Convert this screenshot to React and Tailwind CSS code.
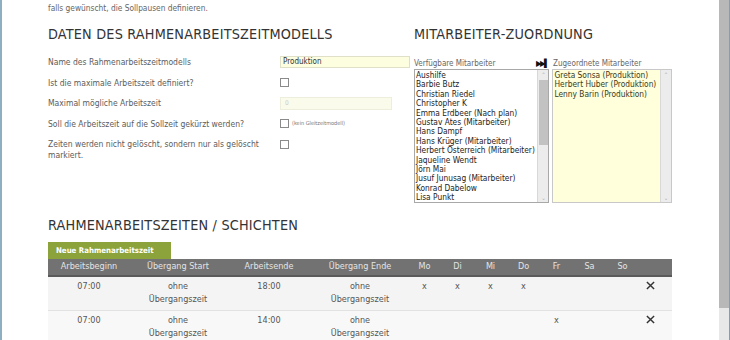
import { useState } from "react";

const font = { fontFamily: '"DejaVu Sans Condensed", "DejaVu Sans", Verdana, sans-serif' };

const available = [
  "Aushilfe",
  "Barbie Butz",
  "Christian Riedel",
  "Christopher K",
  "Emma Erdbeer (Nach plan)",
  "Gustav Ates (Mitarbeiter)",
  "Hans Dampf",
  "Hans Krüger (Mitarbeiter)",
  "Herbert Österreich (Mitarbeiter)",
  "Jaqueline Wendt",
  "Jörn Mai",
  "Jusuf Junusag (Mitarbeiter)",
  "Konrad Dabelow",
  "Lisa Punkt",
];

const assigned = [
  "Greta Sonsa (Produktion)",
  "Herbert Huber (Produktion)",
  "Lenny Barin (Produktion)",
];

const days = ["Mo", "Di", "Mi", "Do", "Fr", "Sa", "So"];

const shifts = [
  { start: "07:00", end: "18:00", days: [true, true, true, true, false, false, false] },
  { start: "07:00", end: "14:00", days: [false, false, false, false, true, false, false] },
];

const cols = "grid grid-cols-[82px_96px_86px_96px_33px_33px_33px_33px_33px_33px_33px_33px]";

const Checkbox = () => (
  <span className="inline-block w-[9px] h-[9px] border border-[#8a8a8a] bg-white" />
);

const ListScroll = ({ thumb }) => (
  <div className="w-[11px] h-full bg-[#ececec] border-l border-[#d8d8d8] flex flex-col items-center">
    <span className="text-[6px] leading-[9px] text-[#b0b0b0]">⌃</span>
    {thumb && <div className="w-[9px] h-[65px] bg-[#c2c2c2] mt-[1px]" />}
    <div className="flex-1" />
    <span className="text-[6px] leading-[9px] text-[#b0b0b0]">⌄</span>
  </div>
);

const FormRow = ({ label, children, tall }) => (
  <div className={`flex ${tall ? "h-[32px]" : "h-[20.5px]"} items-start`}>
    <div className="w-[232px] text-[8.5px] leading-[11px] text-[#5c5c5c] pt-[1px]">{label}</div>
    <div className="flex items-center gap-[3px] h-[12px]">{children}</div>
  </div>
);

export default function App() {
  const [name, setName] = useState("Produktion");

  return (
    <div className="w-[730px] h-[340px] overflow-hidden flex bg-white" style={font}>
      <div className="w-[2px] bg-[#8eaec2]" />
      <div className="flex-1 pl-[46px] pr-[46px]">
        <p className="text-[8.3px] leading-[10px] text-[#666] pt-[3px]">
          falls gewünscht, die Sollpausen definieren.
        </p>

        <div className="flex gap-[4px] mt-[13px]">
          <div className="w-[362px]">
            <h2 className="text-[14.3px] leading-[17px] text-[#333] tracking-[0.2px]">
              DATEN DES RAHMENARBEITSZEITMODELLS
            </h2>
            <div className="mt-[13px]">
              <FormRow label="Name des Rahmenarbeitszeitmodells">
                <input
                  value={name}
                  onChange={(e) => setName(e.target.value)}
                  className="w-[130px] h-[12px] bg-[#fdfde0] border border-[#e0e0c8] text-[8px] px-[2px] text-[#333] outline-none"
                />
              </FormRow>
              <FormRow label="Ist die maximale Arbeitszeit definiert?">
                <Checkbox />
              </FormRow>
              <FormRow label="Maximal mögliche Arbeitszeit">
                <div className="w-[112px] h-[13px] bg-[#fbfbec] border border-[#eeeedc] text-[6.5px] leading-[11px] pl-[4px] text-[#ccc]">
                  0
                </div>
              </FormRow>
              <FormRow label="Soll die Arbeitszeit auf die Sollzeit gekürzt werden?">
                <Checkbox />
                <span className="text-[5.5px] text-[#777]">(kein Gleitzeitmodell)</span>
              </FormRow>
              <FormRow tall label={<span className="block w-[232px]">Zeiten werden nicht gelöscht, sondern nur als gelöscht markiert.</span>}>
                <Checkbox />
              </FormRow>
            </div>
          </div>

          <div className="w-[258px]">
            <h2 className="text-[14.3px] leading-[17px] text-[#333] tracking-[0.2px]">
              MITARBEITER-ZUORDNUNG
            </h2>
            <div className="flex mt-[14px] items-end h-[12px]">
              <span className="w-[122px] text-[8px] leading-[10px] text-[#666]">Verfügbare Mitarbeiter</span>
              <span className="w-[17px] text-[8px] leading-[10px] text-[#111] tracking-[-1.5px]">▶▶▌</span>
              <span className="text-[8px] leading-[10px] text-[#666]">Zugeordnete Mitarbeiter</span>
            </div>
            <div className="flex gap-[3px] h-[134px]">
              <div className="w-[136px] h-full border border-[#a8a8a8] bg-white flex overflow-hidden">
                <ul className="flex-1 pl-[1px] pt-[1px] overflow-hidden">
                  {available.map((n) => (
                    <li key={n} className="text-[8.3px] leading-[9.4px] text-[#222] whitespace-nowrap">
                      {n}
                    </li>
                  ))}
                </ul>
                <ListScroll thumb />
              </div>
              <div className="w-[120px] h-full border border-[#c8c8c8] bg-[#ffffdc] flex overflow-hidden">
                <ul className="flex-1 pl-[1px] pt-[1px]">
                  {assigned.map((n) => (
                    <li key={n} className="text-[8.3px] leading-[9.4px] text-[#3a3a20] whitespace-nowrap">
                      {n}
                    </li>
                  ))}
                </ul>
                <ListScroll />
              </div>
            </div>
          </div>
        </div>

        <h2 className="text-[14.3px] leading-[17px] text-[#333] tracking-[0.2px] mt-[14px]">
          RAHMENARBEITSZEITEN / SCHICHTEN
        </h2>
        <button className="mt-[8px] h-[17px] w-[123px] bg-[#8ca23a] text-white text-[7.8px] font-bold text-left pl-[8px] block">
          Neue Rahmenarbeitszeit
        </button>
        <div className="w-[624px]">
          <div className={`${cols} h-[18px] bg-[#727272] border-b-2 border-[#5a5a5a] text-[9px] text-[#e4e4e4] items-center text-center`}>
            <span>Arbeitsbeginn</span>
            <span>Übergang Start</span>
            <span>Arbeitsende</span>
            <span>Übergang Ende</span>
            {days.map((d) => (
              <span key={d}>{d}</span>
            ))}
            <span />
          </div>
          {shifts.map((s, i) => (
            <div
              key={i}
              className={`${cols} h-[34px] ${i === 0 ? "bg-[#f4f4f4]" : "bg-[#f8f8f8]"} border-b border-[#e2e2e2] text-[9px] leading-[13px] text-[#555] text-center pt-[3px]`}
            >
              <span>{s.start}</span>
              <span>ohne<br />Übergangszeit</span>
              <span>{s.end}</span>
              <span>ohne<br />Übergangszeit</span>
              {s.days.map((on, j) => (
                <span key={j}>{on ? "x" : ""}</span>
              ))}
              <span className="flex justify-start pl-[7px] pt-[1px]">
                <svg width="9" height="9" viewBox="0 0 10 10">
                  <path d="M1 1 L9 9 M9 1 L1 9" stroke="#333" strokeWidth="1.6" />
                </svg>
              </span>
            </div>
          ))}
        </div>
      </div>
      <div className="w-[10px] flex flex-col">
        <div className="h-[308px] bg-[#b8b8b8]" />
        <div className="flex-1 bg-[#e8e8e8]" />
      </div>
      <div className="w-[1px] bg-[#7f9fb8]" />
    </div>
  );
}
